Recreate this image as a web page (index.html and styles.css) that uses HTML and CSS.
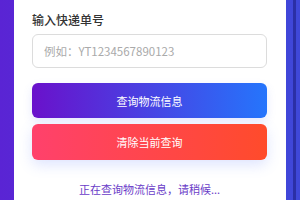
FILE: index.html
```html
<!DOCTYPE html>
<html lang="zh-CN">
<head>
    <meta charset="UTF-8">
    <meta name="viewport" content="width=device-width, initial-scale=1.0">
    <title>快递查询</title>
    <link rel="stylesheet" href="styles.css">
</head>
<body>
    <div class="container">
        <div class="query-box">
            <div class="form-group">
                <label for="trackingNo">输入快递单号</label>
                <input type="text" id="trackingNo" placeholder="例如：YT1234567890123">
            </div>
            <button class="btn btn-query">查询物流信息</button>
            <button class="btn btn-clear">清除当前查询</button>
            <div class="status">正在查询物流信息，请稍候...</div>
        </div>
    </div>
</body>
</html>
```

FILE: styles.css
```css
body {
    font-family: 'Noto Sans CJK SC', 'Noto Sans', sans-serif;
    margin: 0;
    padding: 0;
    color: #333;
    height: 200px;
    overflow: hidden;
    background:
        linear-gradient(90deg, transparent 293px, #2b2fa6 293px, #2b2fa6 296px, transparent 296px),
        linear-gradient(90deg, #5a24d4, #3f48d9);
}

.container {
    margin: 0 14px;
    background-color: white;
    height: 200px;
}

.query-box {
    padding: 11px 19px 0 18px;
}

.form-group label {
    display: block;
    font-size: 12px;
    line-height: 18px;
    font-weight: 500;
    color: #333;
    margin-bottom: 5px;
}

.form-group input {
    display: block;
    width: 100%;
    height: 34px;
    padding: 0 11px;
    border: 1px solid #dcdcdc;
    border-radius: 6px;
    box-sizing: border-box;
    font-family: inherit;
    font-size: 11.5px;
    color: #333;
    outline: none;
}

.form-group input::placeholder {
    color: #aaa;
}

.btn {
    display: block;
    width: 100%;
    border: none;
    border-radius: 6px;
    color: white;
    font-family: inherit;
    font-size: 11px;
    cursor: pointer;
}

.btn-query {
    margin-top: 15px;
    height: 35px;
    background: linear-gradient(90deg, #6a11cb, #2575fc);
    box-shadow: 0 4px 10px rgba(90, 110, 240, 0.15);
}

.btn-clear {
    margin-top: 6px;
    height: 36px;
    background: linear-gradient(90deg, #ff416c, #ff4b2b);
    box-shadow: 0 5px 14px rgba(90, 120, 250, 0.2);
}

.status {
    margin-top: 20px;
    text-align: center;
    font-size: 11px;
    line-height: 18px;
    color: #6a3cc8;
}
```
